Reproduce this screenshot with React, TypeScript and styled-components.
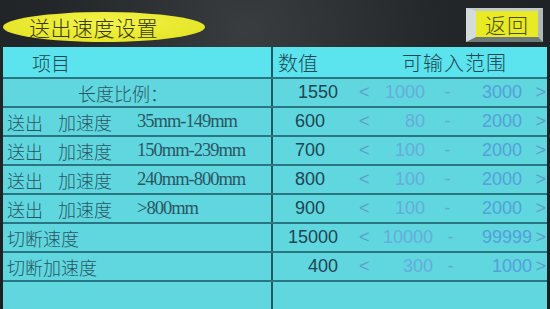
import styled, { createGlobalStyle } from 'styled-components';

const GlobalStyle = createGlobalStyle`
  html, body {
    margin: 0;
    padding: 0;
    background: #1e2124;
  }
  * { box-sizing: border-box; }
`;

const CJK = `"Noto Sans CJK SC", "Noto Sans", sans-serif`;
const SERIF = `"Liberation Serif", "Noto Sans CJK SC", serif`;
const SANS = `"Liberation Sans", Arial, sans-serif`;

const Screen = styled.div`
  width: 550px;
  height: 309px;
  overflow: hidden;
  display: flex;
  flex-direction: column;
  background: radial-gradient(ellipse at 45% 10%, #3a3d40 0%, #24272a 45%, #1b1e21 100%);
`;

const TopBar = styled.div`
  height: 47px;
  flex: none;
  display: flex;
  justify-content: space-between;
  align-items: flex-end;
  padding: 0 7px 5px 3px;
`;

const TitleOval = styled.div`
  width: 202px;
  height: 30px;
  border-radius: 50%;
  background: radial-gradient(ellipse at 50% 35%, #f4f44a 0%, #e6e62a 70%, #cfcf22 100%);
  display: flex;
  align-items: center;
  padding-left: 26px;
  font-family: ${CJK};
  font-size: 21px;
  font-weight: 300;
  color: #3a3a12;
  letter-spacing: 0.5px;
`;

const BackButton = styled.button`
  width: 77px;
  height: 34px;
  padding: 0;
  border-style: solid;
  border-width: 3px 5px 5px 10px;
  border-color: #c3cbcb #b0baba #6f7a7a #d3dbdb;
  background: #e8ea24;
  font-family: ${CJK};
  font-size: 21px;
  font-weight: 300;
  color: #4c4c1c;
  display: flex;
  align-items: center;
  justify-content: center;
  letter-spacing: 1px;
  cursor: pointer;
`;

const Table = styled.div`
  flex: 1;
  margin-left: 3px;
  width: 544px;
  display: flex;
  flex-direction: column;
  background: #5fd6df;
`;

const Row = styled.div<{ $head?: boolean; $fill?: boolean }>`
  display: grid;
  grid-template-columns: 270px 1fr;
  height: ${(p) => (p.$head ? '32px' : '29px')};
  flex: ${(p) => (p.$fill ? '1' : 'none')};
  background: ${(p) => (p.$head ? '#5be4ee' : '#60d6df')};
  border-bottom: ${(p) => (p.$fill ? 'none' : '2px solid #2a7582')};
`;

const LeftCell = styled.div<{ $pad?: number }>`
  border-right: 2px solid #1f5865;
  display: flex;
  align-items: center;
  padding-left: ${(p) => p.$pad ?? 4}px;
  font-family: ${CJK};
  font-size: 18px;
  font-weight: 300;
  color: #2a5662;
  white-space: nowrap;
`;

const HeadText = styled.span`
  font-family: ${CJK};
  font-size: 19px;
  font-weight: 300;
  color: #1f4652;
`;

const RightCell = styled.div`
  display: grid;
  grid-template-columns: 70px 1fr;
  align-items: center;
`;

const HeadRight = styled.div`
  display: flex;
  align-items: center;
  padding-left: 5px;
  font-family: ${CJK};
  font-size: 20px;
  font-weight: 300;
  color: #1f4652;
`;

const RangeHead = styled.span`
  margin-left: 84px;
  letter-spacing: 1px;
`;

const Part = styled.span<{ $w: number }>`
  display: inline-block;
  width: ${(p) => p.$w}px;
`;

const Spec = styled.span`
  font-family: ${SERIF};
  font-size: 18.5px;
  letter-spacing: -1px;
  color: #2a5662;
`;

const Value = styled.div<{ $align: 'left' | 'right' }>`
  font-family: ${SANS};
  font-size: 18px;
  color: #1d4553;
  text-align: ${(p) => p.$align};
  padding: ${(p) => (p.$align === 'left' ? '0 0 0 22px' : '0 5px 0 0')};
`;

const Range = styled.div<{ $shift?: boolean }>`
  display: grid;
  grid-template-columns: ${(p) =>
    p.$shift ? '30px 60px 35px 64px 1fr' : '30px 52px 45px 52px 1fr'};
  align-items: center;
  font-family: ${SANS};
  font-size: 18px;
`;

const Angle = styled.span<{ $right?: boolean }>`
  color: #5f9fc6;
  font-weight: 300;
  text-align: ${(p) => (p.$right ? 'right' : 'left')};
  padding: ${(p) => (p.$right ? '0 1px 0 0' : '0 0 0 16px')};
`;

const Num = styled.span<{ $dim?: boolean }>`
  text-align: right;
  color: ${(p) => (p.$dim ? '#66acdc' : '#559fda')};
`;

const Dash = styled.span`
  text-align: center;
  color: #65a8d0;
`;

type RowData = {
  label?: string;
  a?: string;
  b?: string;
  spec?: string;
  pad?: number;
  value: string;
  align: 'left' | 'right';
  low: string;
  high: string;
  shift?: boolean;
};

const rows: RowData[] = [
  { label: '长度比例：', pad: 75, value: '1550', align: 'right', low: '1000', high: '3000' },
  { a: '送出', b: '加速度', spec: '35mm-149mm', value: '600', align: 'left', low: '80', high: '2000' },
  { a: '送出', b: '加速度', spec: '150mm-239mm', value: '700', align: 'left', low: '100', high: '2000' },
  { a: '送出', b: '加速度', spec: '240mm-800mm', value: '800', align: 'left', low: '100', high: '2000' },
  { a: '送出', b: '加速度', spec: '>800mm', value: '900', align: 'left', low: '100', high: '2000' },
  { label: '切断速度', value: '15000', align: 'right', low: '10000', high: '99999', shift: true },
  { label: '切断加速度', value: '400', align: 'right', low: '300', high: '1000', shift: true },
];

export default function App() {
  return (
    <Screen>
      <GlobalStyle />
      <TopBar>
        <TitleOval>送出速度设置</TitleOval>
        <BackButton type="button">返回</BackButton>
      </TopBar>
      <Table>
        <Row $head>
          <LeftCell $pad={29}>
            <HeadText>项目</HeadText>
          </LeftCell>
          <HeadRight>
            数值
            <RangeHead>可输入范围</RangeHead>
          </HeadRight>
        </Row>
        {rows.map((r, i) => (
          <Row key={i}>
            <LeftCell $pad={r.pad}>
              {r.label ?? (
                <>
                  <Part $w={51}>{r.a}</Part>
                  <Part $w={79}>{r.b}</Part>
                  <Spec>{r.spec}</Spec>
                </>
              )}
            </LeftCell>
            <RightCell>
              <Value $align={r.align}>{r.value}</Value>
              <Range $shift={r.shift}>
                <Angle>&lt;</Angle>
                <Num $dim>{r.low}</Num>
                <Dash>-</Dash>
                <Num>{r.high}</Num>
                <Angle $right>&gt;</Angle>
              </Range>
            </RightCell>
          </Row>
        ))}
        <Row $fill>
          <LeftCell />
          <RightCell />
        </Row>
      </Table>
    </Screen>
  );
}
